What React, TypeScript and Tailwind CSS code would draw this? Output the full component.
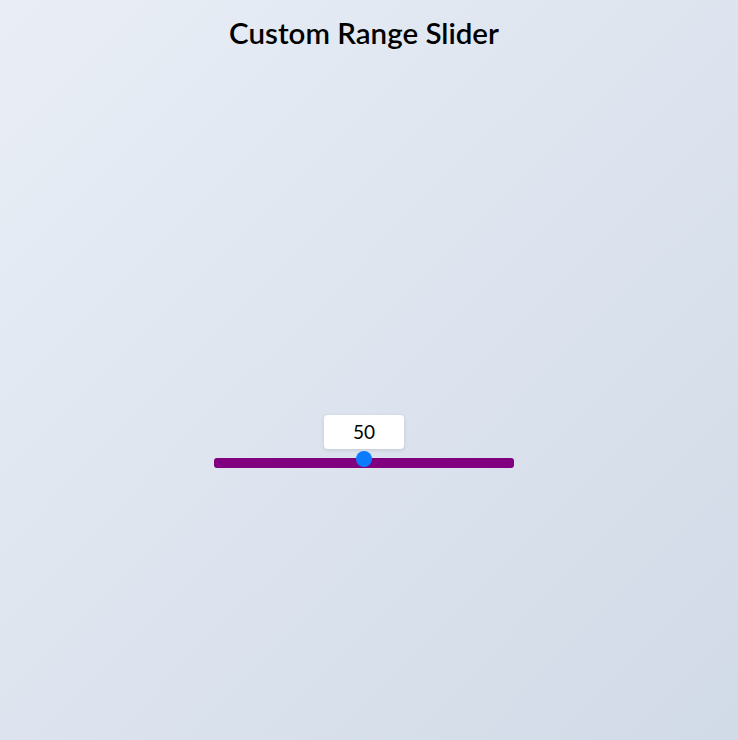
import { useState } from "react";

function App() {
  const [value] = useState(50);

  return (
    <div
      className="min-h-screen w-full pr-[10px] flex flex-col items-center bg-gradient-to-br from-[#e9eef6] to-[#d1dae7]"
      style={{ fontFamily: "Lato, 'Liberation Sans', sans-serif" }}
    >
      <h1 className="mt-[14px] text-[29.5px] leading-[38px] font-semibold text-black">
        Custom Range Slider
      </h1>

      {/* slider */}
      <div className="mt-[363px] w-[300px] flex flex-col items-center">
        <div className="w-[80px] h-[34px] bg-white rounded-[4px] shadow-[0_1px_4px_rgba(0,0,0,0.12)] flex items-center justify-center text-[19px] text-black">
          {value}
        </div>
        <div className="relative mt-[9px] w-full h-[10px] rounded-[3px] bg-[#800080]">
          <div className="absolute left-[142px] top-[-7px] w-[16px] h-[16px] rounded-full bg-[#0a7bff]" />
        </div>
      </div>
    </div>
  );
}

export default App;
